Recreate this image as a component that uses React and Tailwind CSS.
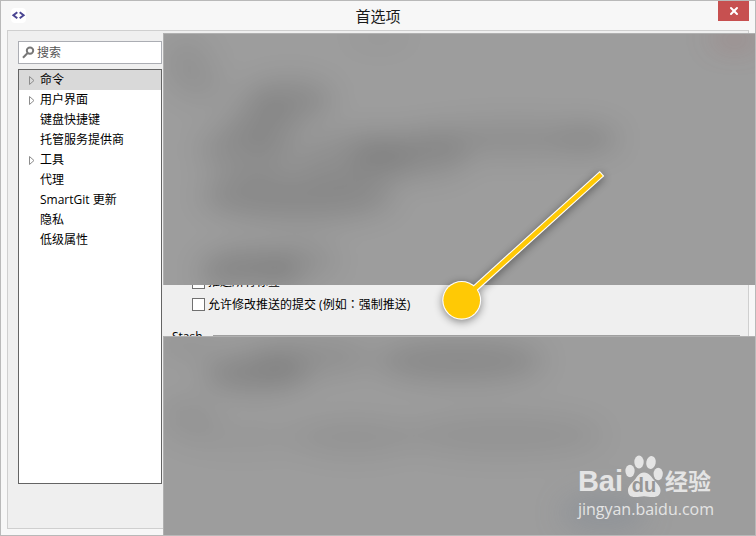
import { X } from 'lucide-react'

const NAV = [
  { label: '命令', expandable: true, active: true },
  { label: '用户界面', expandable: true },
  { label: '键盘快捷键' },
  { label: '托管服务提供商' },
  { label: '工具', expandable: true },
  { label: '代理' },
  { label: 'SmartGit 更新' },
  { label: '隐私' },
  { label: '低级属性' },
]

function TitleBar() {
  return (
    <header className="relative flex h-[29px] items-center justify-center">
      <span className="absolute left-[10px] top-[7px] flex size-[15px] items-center justify-center rounded-sm bg-white">
        <svg viewBox="0 0 15 15" className="size-[15px]" fill="none" stroke="#4a4592" strokeWidth="2">
          <path d="M6.3 4.2 2.4 7.2l3.9 3M8.7 4.2l3.9 3-3.9 3" />
        </svg>
      </span>
      <h1 className="text-[15px] leading-5 text-[#1a1a1a]">首选项</h1>
      <button
        type="button"
        aria-label="关闭"
        className="absolute right-[6px] top-0 flex h-5 w-[31px] items-center justify-center bg-[#c75050] text-white"
      >
        <X size={12} strokeWidth={4} />
      </button>
    </header>
  )
}

function Sidebar() {
  return (
    <aside className="flex w-[144px] shrink-0 flex-col">
      <label className="flex h-[23px] items-center gap-[2px] border border-[#abadb3] bg-white pl-[3px]">
        <svg viewBox="0 0 13 13" className="size-[13px] shrink-0" fill="none" stroke="#777" strokeWidth="2">
          <circle cx="8" cy="4.6" r="3.2" />
          <path d="M5.6 7 1 11.8" />
        </svg>
        <input
          type="text"
          aria-label="搜索"
          placeholder="搜索"
          className="w-full min-w-0 bg-transparent text-xs text-[#444] outline-none placeholder:text-[#555]"
        />
      </label>
      <nav className="mt-[5px] flex-1 border border-[#646464] bg-white">
        <ul>
          {NAV.map(item => (
            <li key={item.label}>
              <a
                href="#"
                className={`flex h-5 items-center gap-[5px] pl-[9px] text-xs text-black ${item.active ? 'bg-[#d9d9d9]' : ''}`}
              >
                <svg viewBox="0 0 7 10" className="h-[10px] w-[7px]" fill="none" stroke="#8c8c8c">
                  {item.expandable && <path d="M1.500 1.500v8l4.500-4z" />}
                </svg>
                {item.label}
              </a>
            </li>
          ))}
        </ul>
      </nav>
    </aside>
  )
}

function Option({ children }) {
  return (
    <label className="flex h-[22px] items-center gap-[3px] text-xs text-black">
      <input type="checkbox" className="size-[13px] shrink-0 appearance-none border border-[#707070] bg-white" />
      <span>{children}</span>
    </label>
  )
}

// soft smudges of the covered form: [cx, cy, rx, ry, opacity, fill]
const TOP_SMUDGES = [
  [22, 28, 24, 26, 0.06],
  [40, 52, 24, 18, 0.04],
  [125, 66, 44, 20, 0.11],
  [100, 90, 36, 24, 0.07],
  [82, 116, 46, 26, 0.09],
  [190, 122, 60, 24, 0.08],
  [245, 122, 60, 22, 0.1],
  [350, 105, 105, 16, 0.09],
  [425, 105, 30, 16, 0.05],
  [134, 162, 96, 24, 0.12],
  [86, 238, 50, 22, 0.15],
  [140, 226, 34, 18, 0.07],
  [215, -2, 32, 10, 0.08],
  [572, 2, 26, 10, 0.3, '#a04040'],
]

const BOTTOM_SMUDGES = [
  [20, 4, 30, 14, 0.06],
  [92, 36, 52, 18, 0.14],
  [150, 20, 60, 18, 0.08],
  [296, 24, 84, 20, 0.12],
  [24, 80, 30, 20, 0.05],
  [80, 100, 60, 14, 0.03],
  [190, 100, 60, 18, 0.06],
  [340, 98, 100, 20, 0.06],
  [440, 176, 44, 18, 0.22, '#5f7488'],
]

function Cover({ className, smudges, children }) {
  return (
    <div className={`absolute left-[162px] right-0 overflow-hidden border-l border-t border-[#b0b0b0] bg-[#9d9d9d] ${className}`}>
      <svg className="absolute inset-0 size-full blur-[14px]" aria-hidden="true">
        {smudges.map(([cx, cy, rx, ry, opacity, fill = '#000']) => (
          <ellipse key={`${cx}-${cy}`} cx={cx} cy={cy} rx={rx} ry={ry} fill={fill} opacity={opacity} />
        ))}
      </svg>
      {children}
    </div>
  )
}

function Pointer() {
  return (
    <svg
      viewBox="0 0 180 170"
      className="absolute left-[430px] top-[159px] h-[170px] w-[180px] overflow-visible drop-shadow-[0_2px_4px_rgba(0,0,0,0.45)]"
      aria-hidden="true"
    >
      <path d="M30.7 140.4 171 13.500" stroke="#fff" strokeWidth="6.8" />
      <circle cx="30.7" cy="140.3" r="19.4" fill="#fff" />
      <path d="M30.7 140.4 170.2 14.200" stroke="#ffc905" strokeWidth="4.6" />
      <circle cx="30.7" cy="140.3" r="18.3" fill="#ffc905" />
    </svg>
  )
}

function Watermark() {
  return (
    <div className="absolute bottom-[14px] right-[41px] flex flex-col items-start text-[#e4e4e4]">
      <div className="flex items-end gap-[2px]">
        <span className="text-[29px] font-bold leading-8 font-['Liberation_Sans']">Bai</span>
        <span className="relative flex h-[42px] w-[38px] items-end justify-center">
          <svg viewBox="0 0 38 42" className="absolute inset-0 h-[42px] w-[38px]" fill="#e4e4e4" aria-hidden="true">
            <ellipse cx="5" cy="16" rx="4.600" ry="6.200" />
            <ellipse cx="14" cy="7" rx="4.700" ry="6.500" />
            <ellipse cx="26" cy="7.500" rx="4.700" ry="6.500" transform="rotate(12 26 7.500)" />
            <ellipse cx="33.200" cy="19" rx="4.600" ry="6.200" />
            <path d="M19 17.500c5 0 7 4 10 7.500 3.500 4 6.500 6.500 6.500 10.500 0 4.500-3 6.500-7.500 6.500-3.500 0-6-.8-9-.8s-5.500.8-9 .8C5.500 42 3 40 3 35.500c0-4 3-6.500 6.500-10.500 3-3.500 4.500-7.500 9.500-7.500z" />
          </svg>
          <span className="relative text-xl font-bold leading-6 text-[#969696] font-['Liberation_Sans']">du</span>
        </span>
        <span className="text-[23px] font-bold leading-8">经验</span>
      </div>
      <span className="text-[16px] leading-6 font-['Open_Sans']">jingyan.baidu.com</span>
    </div>
  )
}

export default function App() {
  return (
    <div className="relative flex min-h-screen flex-col border border-[#b9b9b9] bg-[#f7f7f7] font-['Open_Sans','Noto_Sans_CJK_SC',sans-serif]">
      <TitleBar />
      <main className="mx-[6px] mb-[6px] flex flex-1 border border-[#cfcfcf] bg-[#efefef] pl-[10px]">
        <div className="flex pt-[10px] pb-11">
          <Sidebar />
        </div>
        <form className="min-w-0 flex-1 pl-[30px] pt-[240px]">
          <Option>推送所有标签</Option>
          <Option>
            允许修改推送的提交 (例如<span className="font-['Noto_Sans_CJK_TC',sans-serif]">：</span>强制推送)
          </Option>
          <div className="-ml-5 mt-[14px] flex items-start gap-[10px] pr-2 text-xs text-black">
            <h2>Stash</h2>
            <hr className="mt-1.5 flex-1 border-[#a0a0a0]" />
          </div>
        </form>
      </main>

      <Cover className="top-8 h-[252px]" smudges={TOP_SMUDGES} />
      <Cover className="bottom-0 top-[335px]" smudges={BOTTOM_SMUDGES}>
        <Watermark />
      </Cover>
      <Pointer />
    </div>
  )
}
